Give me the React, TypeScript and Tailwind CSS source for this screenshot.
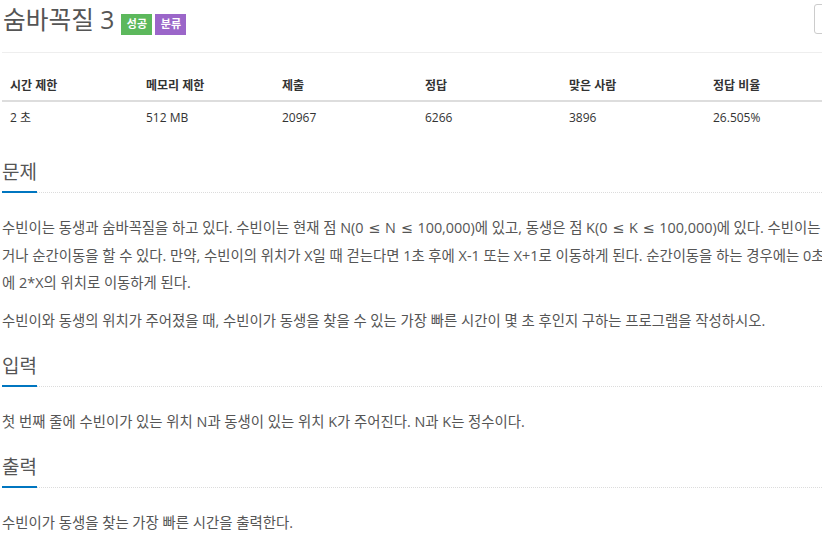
import React from "react";

const stats = [
  { label: "시간 제한", value: "2 초" },
  { label: "메모리 제한", value: "512 MB" },
  { label: "제출", value: "20967" },
  { label: "정답", value: "6266" },
  { label: "맞은 사람", value: "3896" },
  { label: "정답 비율", value: "26.505%" },
];

const Headline: React.FC<{ title: string }> = ({ title }) => (
  <div className="border-b border-dotted border-[#dcdcdc]">
    <h2 className="-mb-px inline-block border-b-2 border-[#0076c0] pb-[8px] text-[19px] leading-[22px] text-[#555]">
      {title}
    </h2>
  </div>
);

// math symbol is rendered a bit wider in the original
const Le = () => <span className="mx-px font-['DejaVu_Sans',sans-serif]">≤</span>;

const App: React.FC = () => {
  return (
    <div className="h-[548px] w-[822px] overflow-hidden bg-white font-['Open_Sans','Noto_Sans_CJK_KR',sans-serif]">
      <div className="w-[1000px] pl-[2px]">
        {/* Title bar */}
        <div className="flex h-[53px] w-[850px] border-b border-[#eee]">
          <h1 className="ml-px text-[24.7px] leading-[40px] text-[#555]">숨바꼭질 3</h1>
          <span className="ml-[7px] mt-[14px] flex h-[21px] w-[31px] items-center justify-center bg-[#5cb85c] text-[11px] font-bold text-white">
            성공
          </span>
          <span className="ml-[3px] mt-[14px] flex h-[21px] w-[31px] items-center justify-center bg-[#9b66c9] text-[11px] font-bold text-white">
            분류
          </span>
          <div className="ml-auto mt-[4px] h-[30px] w-[38px] rounded-[3px] border border-[#ccc]" />
        </div>

        {/* Stats table */}
        <div className="grid w-[847px] grid-cols-[136px_136px_143px_144px_144px_144px] text-[12px] leading-[20px] text-[#333]">
          {stats.map((s) => (
            <div key={s.label} className="border-b-2 border-[#ddd] pb-[4px] pl-[8px] pt-[23px] font-bold">
              {s.label}
            </div>
          ))}
          {stats.map((s) => (
            <div key={s.value} className="h-[36px] pl-[8px] pt-[6px]">
              {s.value}
            </div>
          ))}
        </div>

        {/* 문제 */}
        <div className="mt-[23px]">
          <Headline title="문제" />
          <div className="mt-[21px] whitespace-nowrap text-[14.4px] leading-[27px] text-[#555]">
            <p>
              수빈이는 동생과 숨바꼭질을 하고 있다. 수빈이는 현재 점 N(0 <Le /> N <Le /> 100,000)에 있고, 동생은 점 K(0 <Le /> K <Le /> 100,000)에 있다. 수빈이는 걷
              <br />
              거나 순간이동을 할 수 있다. 만약, 수빈이의 위치가 X일 때 걷는다면 1초 후에 X-1 또는 X+1로 이동하게 된다. 순간이동을 하는 경우에는 0초 후
              <br />
              에 2*X의 위치로 이동하게 된다.
            </p>
            <p className="mt-[11px]">
              수빈이와 동생의 위치가 주어졌을 때, 수빈이가 동생을 찾을 수 있는 가장 빠른 시간이 몇 초 후인지 구하는 프로그램을 작성하시오.
            </p>
          </div>
        </div>

        {/* 입력 */}
        <div className="mt-[21px]">
          <Headline title="입력" />
          <p className="mt-[21px] whitespace-nowrap text-[14.4px] leading-[27px] text-[#555]">
            첫 번째 줄에 수빈이가 있는 위치 N과 동생이 있는 위치 K가 주어진다. N과 K는 정수이다.
          </p>
        </div>

        {/* 출력 */}
        <div className="mt-[21px]">
          <Headline title="출력" />
          <p className="mt-[21px] whitespace-nowrap text-[14.4px] leading-[27px] text-[#555]">
            수빈이가 동생을 찾는 가장 빠른 시간을 출력한다.
          </p>
        </div>
      </div>
    </div>
  );
};

export default App;
